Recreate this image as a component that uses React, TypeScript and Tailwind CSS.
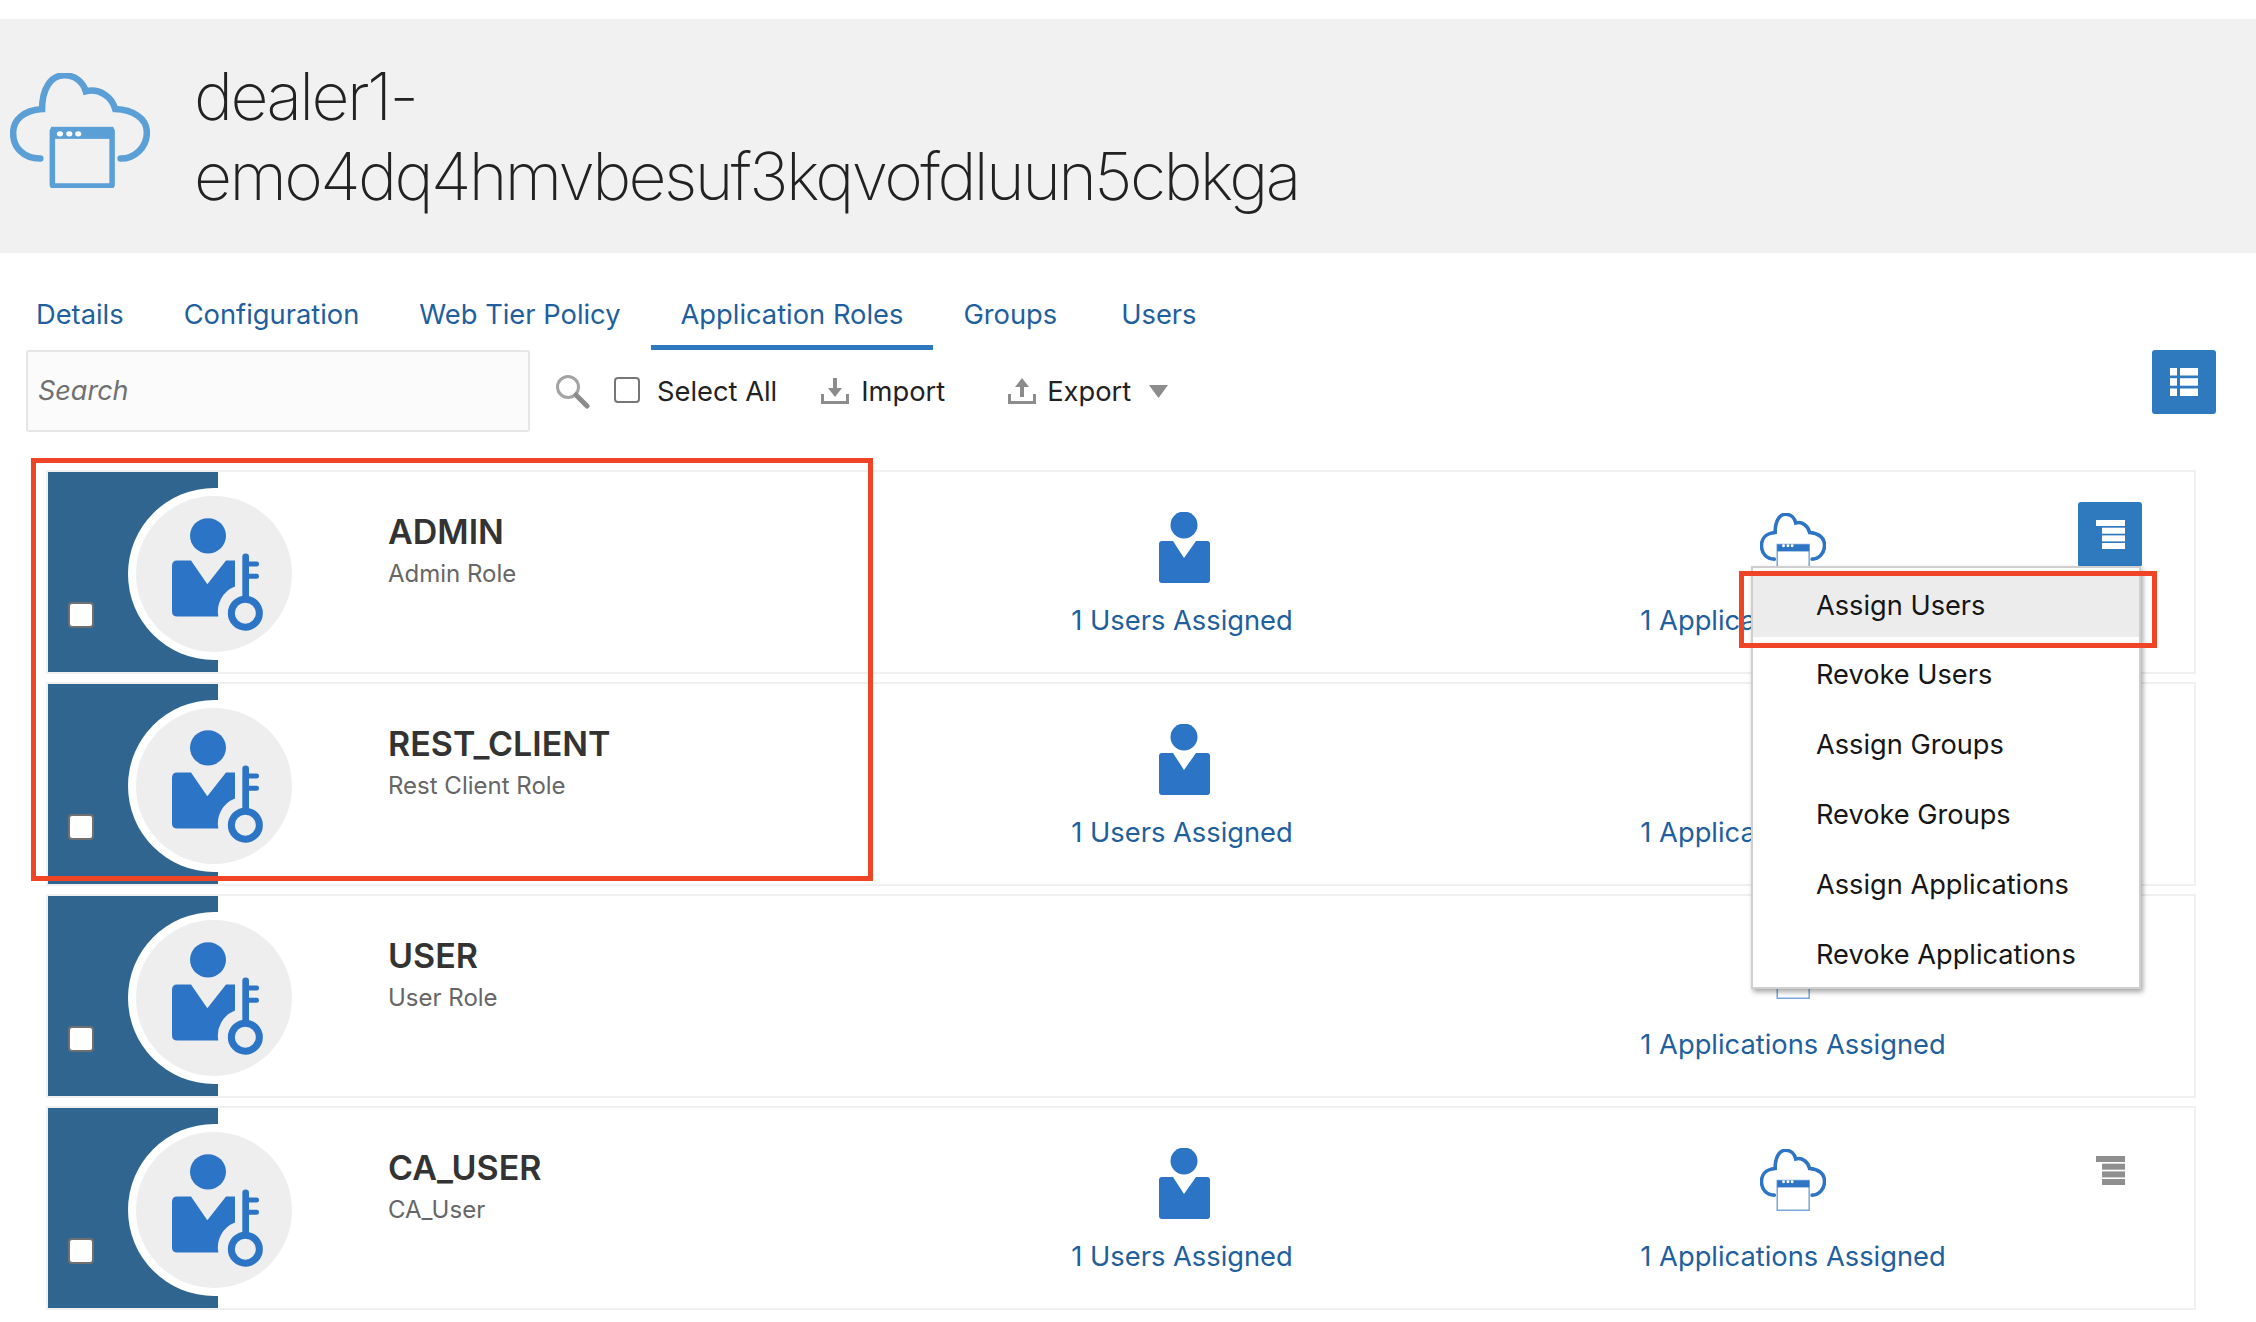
import { useState } from "react";

type Role = { name: string; desc: string; users: boolean };

const roles: Role[] = [
  { name: "ADMIN", desc: "Admin Role", users: true },
  { name: "REST_CLIENT", desc: "Rest Client Role", users: true },
  { name: "USER", desc: "User Role", users: false },
  { name: "CA_USER", desc: "CA_User", users: true },
];

const tabs = ["Details", "Configuration", "Web Tier Policy", "Application Roles", "Groups", "Users"];

const menuItems = [
  "Assign Users",
  "Revoke Users",
  "Assign Groups",
  "Revoke Groups",
  "Assign Applications",
  "Revoke Applications",
];

function CloudIcon({ small }: { small?: boolean }) {
  const color = small ? "#2d74c4" : "#5a9fd6";
  return (
    <svg
      viewBox="0 0 314 344"
      preserveAspectRatio="none"
      className={small ? "h-[62px] w-[66px]" : "mb-[12px] h-[115px] w-[140px]"}
    >
      <path
        d="M68 256C30 256 7 222 7 180C7 140 30 112 72 108C72 50 90 7 122 7C148 7 165 30 170 55C200 45 228 70 236 108C275 110 307 135 307 178C307 222 280 256 248 256"
        fill="none"
        stroke={color}
        strokeWidth={small ? 3.6 : 6.5}
        strokeLinecap="round"
        vectorEffect="non-scaling-stroke"
      />
      {small ? (
        <>
          <rect x="82" y="175" width="152" height="165" fill="#fff" stroke="#7ba7dd" strokeWidth="1.5" vectorEffect="non-scaling-stroke" />
          <rect x="82" y="175" width="152" height="38" fill={color} />
        </>
      ) : (
        <>
          <rect x="95" y="170" width="134" height="168" rx="3" fill="none" stroke={color} strokeWidth="5.5" vectorEffect="non-scaling-stroke" />
          <rect x="92" y="161" width="140" height="36" fill={color} />
        </>
      )}
      <ellipse cx="112" cy="182" rx="7" ry="8" fill="#fff" />
      <ellipse cx="133" cy="182" rx="7" ry="8" fill="#fff" />
      <ellipse cx="153" cy="182" rx="7" ry="8" fill="#fff" />
    </svg>
  );
}

function RoleIcon() {
  return (
    <svg viewBox="0 0 273 338" className="h-[113px] w-[91px]" fill="#2b74c6">
      <ellipse cx="108" cy="53" rx="54" ry="53" />
      <path d="M16 127H57L106 198L162 127H189V205A80 80 0 0 0 139 295H16Q0 295 0 279V143Q0 127 16 127Z" />
      <rect x="211" y="106" width="20" height="140" rx="10" />
      <rect x="225" y="130" width="36" height="15" rx="7" />
      <rect x="225" y="167" width="36" height="15" rx="7" />
      <circle cx="220" cy="285" r="42" fill="none" stroke="#2b74c6" strokeWidth="21" />
    </svg>
  );
}

function UserIcon() {
  return (
    <svg viewBox="0 0 51 71" className="h-[71px] w-[51px]" fill="#2b74c6">
      <circle cx="25" cy="13" r="13.5" />
      <path d="M3 29H14L25 46L37 29H48Q51 29 51 32V68Q51 71 48 71H3Q0 71 0 68V32Q0 29 3 29Z" />
    </svg>
  );
}

function StackIcon({ color }: { color: string }) {
  return (
    <svg viewBox="0 0 29 29" className="h-[29px] w-[29px]" fill={color}>
      <rect x="0" y="0" width="29" height="6" />
      <rect x="6" y="7.7" width="23" height="6" />
      <rect x="6" y="15.4" width="23" height="6" />
      <rect x="6" y="23" width="23" height="6" />
    </svg>
  );
}

function ArrowTray({ up }: { up?: boolean }) {
  return (
    <svg viewBox="0 0 28 28" className="h-[28px] w-[28px]" fill="#8c8c8c">
      <path d="M0 17H3V24H25V17H28V27H0Z" />
      {up ? <path d="M14 1L21 10H16V20H12V10H7Z" /> : <path d="M12 1H16V11H21L14 20L7 11H12Z" />}
    </svg>
  );
}

function RoleRow({ role, open }: { role: Role; open: boolean }) {
  return (
    <div className="relative grid h-[204px] grid-cols-[170px_662px_608px_556px_1fr] border-2 border-[#f0f0f0] bg-white">
      <div className="relative bg-[#2f658f]">
        <input
          type="checkbox"
          className="absolute left-[20px] top-[130px] h-[26px] w-[26px] appearance-none rounded-[4px] border-2 border-[#707070] bg-white"
        />
        <div className="absolute left-[80px] top-[16px] h-[172px] w-[90px] overflow-hidden">
          <div className="h-[172px] w-[172px] rounded-full bg-white" />
        </div>
        <div className="absolute left-[88px] top-[24px] z-[1] flex h-[156px] w-[156px] items-center justify-center rounded-full bg-[#eeeeee] pl-[6px]">
          <RoleIcon />
        </div>
      </div>
      <div className="pl-[170px] pt-[38px]">
        <div className="text-[34px] font-semibold leading-[44px] text-[#333333]">{role.name}</div>
        <div className="mt-[4px] text-[24px] leading-[32px] text-[#666666]">{role.desc}</div>
      </div>
      <div className="flex flex-col items-center pt-[40px]">
        {role.users && (
          <>
            <UserIcon />
            <div className="mt-[20px] pr-[4px] text-[27.3px] leading-[36px] text-[#1f5f9e]">1 Users Assigned</div>
          </>
        )}
      </div>
      <div className="flex flex-col items-center pl-[54px] pt-[41px]">
        <CloudIcon small />
        <div className="mt-[28px] whitespace-nowrap text-[27.3px] leading-[36px] text-[#1f5f9e]">
          1 Applications Assigned
        </div>
      </div>
      <div className="pl-[34px] pt-[30px]">
        {open ? (
          <button className="flex h-[65px] w-[64px] items-center justify-center rounded-[3px] bg-[#2f7abf]">
            <StackIcon color="#ffffff" />
          </button>
        ) : (
          <div className="flex h-[65px] w-[64px] items-center justify-center">
            <StackIcon color="#8f8f8f" />
          </div>
        )}
      </div>
      {open && (
        <div className="absolute left-[1703px] top-[94px] z-10 w-[390px] border-2 border-[#cfcfcf] bg-white pt-[4px] shadow-[2px_3px_5px_rgba(0,0,0,0.35)]">
          {menuItems.map((item, i) => (
            <div
              key={item}
              className={`flex items-center pl-[63px] text-[27.2px] text-[#161616] ${
                i === 0 ? "h-[65px] bg-[#ececec] pt-[3px]" : "h-[70px] pt-[6px]"
              }`}
            >
              {item}
            </div>
          ))}
        </div>
      )}
    </div>
  );
}

export default function App() {
  const [activeTab] = useState("Application Roles");

  return (
    <div className="relative min-h-screen overflow-hidden bg-white pt-[19px] font-['Inter',sans-serif]">
      {/* header */}
      <div className="flex h-[234px] items-center bg-[#f1f1f1] pl-[10px]">
        <CloudIcon />
        <h1 className="ml-[44px] w-[1200px] text-[66px] font-extralight leading-[80px] tracking-[-2.6px] text-[#222222]">
          dealer1-emo4dq4hmvbesuf3kqvofdluun5cbkga
        </h1>
      </div>

      {/* tabs */}
      <div className="flex pl-[6px] pt-[45px]">
        {tabs.map((t) => (
          <div
            key={t}
            className={`border-b-[5px] px-[30px] pb-[13px] text-[27.3px] leading-[34px] text-[#1f5f9e] ${
              t === activeTab ? "border-[#2f7abf]" : "border-transparent"
            } ${t === "Users" ? "ml-[4px]" : ""}`}
          >
            {t}
          </div>
        ))}
      </div>

      {/* toolbar */}
      <div className="flex h-[82px] items-center pl-[26px] pr-[40px] text-[27.3px] text-[#222222]">
        <div className="flex h-[82px] w-[504px] items-center rounded-[3px] border-2 border-[#e6e6e6] bg-[#fbfbfb] pl-[10px] text-[27px] italic text-[#707070]">
          Search
        </div>
        <svg viewBox="0 0 35 35" className="ml-[25px] h-[35px] w-[35px]" fill="none">
          <circle cx="13" cy="13" r="10.5" stroke="#a3a3a3" strokeWidth="3" />
          <path d="M21 21L32 32" stroke="#8c8c8c" strokeWidth="5" strokeLinecap="round" />
        </svg>
        <input
          type="checkbox"
          className="ml-[24px] h-[26px] w-[26px] -translate-y-[1px] appearance-none rounded-[4px] border-2 border-[#777777] bg-white"
        />
        <span className="ml-[17px] translate-y-[1px]">Select All</span>
        <span className="ml-[44px]">
          <ArrowTray />
        </span>
        <span className="ml-[12px] translate-y-[1px]">Import</span>
        <span className="ml-[63px]">
          <ArrowTray up />
        </span>
        <span className="ml-[11px] translate-y-[1px]">Export</span>
        <svg viewBox="0 0 19 13" className="ml-[18px] h-[13px] w-[19px]" fill="#8c8c8c">
          <path d="M0 0H19L9.5 13Z" />
        </svg>
        <button className="ml-auto flex h-[64px] w-[64px] -translate-y-[9px] items-center justify-center rounded-[3px] bg-[#2f7abf]">
          <svg viewBox="0 0 28 28" className="h-[28px] w-[28px]" fill="#ffffff">
            <rect x="0" y="0" width="7" height="7.5" />
            <rect x="10" y="0" width="18" height="7.5" />
            <rect x="0" y="10.2" width="7" height="7.5" />
            <rect x="10" y="10.2" width="18" height="7.5" />
            <rect x="0" y="20.5" width="7" height="7.5" />
            <rect x="10" y="20.5" width="18" height="7.5" />
          </svg>
        </button>
      </div>

      {/* roles */}
      <div className="ml-[46px] mt-[38px] flex w-[2150px] flex-col gap-[8px]">
        {roles.map((r, i) => (
          <RoleRow key={r.name} role={r} open={i === 0} />
        ))}
      </div>

      {/* red callouts over the screenshot */}
      <div className="absolute left-[31px] top-[458px] z-20 h-[423px] w-[842px] border-[5px] border-[#ef4426]" />
      <div className="absolute left-[1739px] top-[571px] z-20 h-[77px] w-[418px] border-[5px] border-[#ef4426]" />
    </div>
  );
}
